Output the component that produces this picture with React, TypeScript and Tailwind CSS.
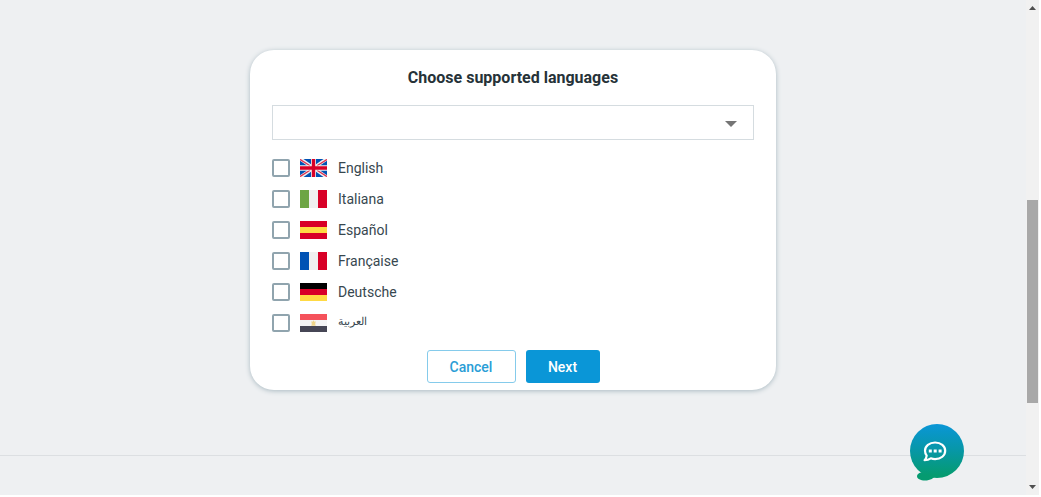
import { useState } from "react";
import type { ReactNode } from "react";

interface Language {
  code: string;
  label: string;
  flag: ReactNode;
}

const languages: Language[] = [
  {
    code: "en",
    label: "English",
    flag: (
      <>
        <path fill="#f0f0f0" d="M0 0h27v18H0z" />
        <path
          fill="#0052b4"
          d="M3.5 0H11V5.2zM23.5 0H16V5.2zM3.5 18H11V12.8zM23.5 18H16V12.8zM0 1.8V6.4H7zM27 1.8V6.4H20zM0 16.2V11.6H7zM27 16.2V11.6H20z"
        />
        <path stroke="#d80027" strokeOpacity=".8" strokeWidth="1.3" d="M0 .4 10 6.8M27 .4 17 6.8M0 17.6l10-6.4M27 17.6l-10-6.4" />
        <path fill="#f0f0f0" d="M11 0h5v18h-5zM0 6.400h27v5.200H0z" />
        <path fill="#d80027" d="M11.8 0h3.4v18h-3.4zM0 7.3h27v3.4H0z" />
      </>
    ),
  },
  {
    code: "it",
    label: "Italiana",
    flag: (
      <>
        <path fill="#f0f0f0" d="M0 0h27v18H0z" />
        <path fill="#6da544" d="M0 0h9v18H0z" />
        <path fill="#d80027" d="M18 0h9v18h-9z" />
      </>
    ),
  },
  {
    code: "es",
    label: "Español",
    flag: (
      <>
        <path fill="#d80027" d="M0 0h27v18H0z" />
        <path fill="#ffda44" d="M0 6h27v6H0z" />
      </>
    ),
  },
  {
    code: "fr",
    label: "Française",
    flag: (
      <>
        <path fill="#f0f0f0" d="M0 0h27v18H0z" />
        <path fill="#0052b4" d="M0 0h9v18H0z" />
        <path fill="#d80027" d="M18 0h9v18h-9z" />
      </>
    ),
  },
  {
    code: "de",
    label: "Deutsche",
    flag: (
      <>
        <path d="M0 0h27v6H0z" />
        <path fill="#d80027" d="M0 6h27v6H0z" />
        <path fill="#ffda44" d="M0 12h27v6H0z" />
      </>
    ),
  },
  {
    code: "ar",
    label: "العربية",
    flag: (
      <>
        <path fill="#f4f4f5" d="M0 0h27v18H0z" />
        <path fill="#f5525b" d="M0 0h27v6H0z" />
        <path fill="#464655" d="M0 12h27v6H0z" />
        <path fill="#efd58a" d="M11.3 7.2l1.3.6.9-1.5.9 1.5 1.3-.6-.5 3 .6 1.5h-4.6l.6-1.5z" />
      </>
    ),
  },
];

function LanguageRow({
  language,
  checked,
  onToggle,
}: {
  language: Language;
  checked: boolean;
  onToggle: () => void;
}) {
  return (
    <li>
      <label className="flex h-[31px] cursor-pointer items-center">
        <input
          type="checkbox"
          checked={checked}
          onChange={onToggle}
          className="size-[18px] shrink-0 appearance-none rounded-xs border-2 border-[#90a4ae] bg-white checked:bg-[#0a96d7]"
        />
        <svg viewBox="0 0 27 18" className="ml-2.5 h-[18px] w-[27px] shrink-0" aria-hidden="true">
          {language.flag}
        </svg>
        <span
          lang={language.code}
          className={`ml-[11px] text-[#37474f] ${language.code === "ar" ? "text-[11px]" : "text-sm"}`}
        >
          {language.label}
        </span>
      </label>
    </li>
  );
}

function ChatButton() {
  return (
    <button type="button" aria-label="Open chat" className="absolute right-[62px] bottom-3.5 cursor-pointer">
      <svg width="54" height="57" viewBox="0 0 54 57" fill="none" className="block">
        <defs>
          <linearGradient id="bubble" x1="0" y1="0" x2="0" y2="57" gradientUnits="userSpaceOnUse">
            <stop stopColor="#0a96d7" />
            <stop offset=".45" stopColor="#0797a8" />
            <stop offset=".9" stopColor="#059b70" />
          </linearGradient>
        </defs>
        <circle cx="27" cy="27" r="27" fill="url(#bubble)" />
        <path fill="url(#bubble)" d="M11 48.5c-2.5.6-4 2-4 3.8 0 2.5 3.5 4.2 8 4.2 5.5 0 9-2.5 11-5.5L22 45z" />
        <path
          stroke="#fff"
          strokeWidth="2.2"
          strokeLinejoin="round"
          d="M16.7 31.600c-1-1.300-1.700-3-1.700-4.800 0-4.800 4.300-8.300 10.100-8.300s10.100 3.500 10.100 8.300-4.300 8.300-10.100 8.300c-1.600 0-3-.3-4.300-.8-1.400 1-3.600 1.900-6.200 1.900 1.400-1.500 1.900-3 2.100-4.600z"
        />
        <path fill="#fff" d="M18.800 25.500h3v3h-3zM23.700 25.500h3v3h-3zM28.600 25.500h3v3h-3z" />
      </svg>
    </button>
  );
}

function ScrollTrack() {
  return (
    <div className="flex w-[13px] shrink-0 flex-col items-center bg-[#f1f1f1] py-1.5" aria-hidden="true">
      <svg width="7" height="4" viewBox="0 0 7 4" className="shrink-0">
        <path fill="#505050" d="M0 4 3.5 0 7 4z" />
      </svg>
      <div className="flex w-full flex-1 flex-col">
        <div className="flex-[190]" />
        <div className="mx-px flex-[203] bg-[#a8a8a8]" />
        <div className="flex-[82]" />
      </div>
      <svg width="7" height="4" viewBox="0 0 7 4" className="shrink-0">
        <path fill="#505050" d="M0 0h7L3.5 4z" />
      </svg>
    </div>
  );
}

export default function App() {
  const [selected, setSelected] = useState<string[]>([]);

  const toggle = (code: string) => {
    setSelected((prev) =>
      prev.includes(code) ? prev.filter((c) => c !== code) : [...prev, code]
    );
  };

  return (
    <div className="flex min-h-screen bg-white pr-0.5 pb-0.5 font-[Roboto,'Noto_Sans',sans-serif]">
      <div className="relative flex min-w-0 flex-1 flex-col bg-[#eef0f2]">
        <main className="flex flex-1 items-start justify-center px-4 pt-[50px] pb-4">
          <form
            onSubmit={(e) => e.preventDefault()}
            className="w-full max-w-[526px] rounded-3xl bg-white px-[22px] pt-4 pb-[7px] shadow-[0_1px_5px_#a9b9c1]"
          >
            <h1 className="text-center text-base leading-6 font-bold text-[#263238]">
              Choose supported languages
            </h1>

            <div className="relative mt-[15px]">
              <select
                aria-label="Supported language"
                defaultValue=""
                className="block h-[35px] w-full appearance-none border border-[#d5dce0] bg-white px-3 text-sm text-[#37474f]"
              >
                <option value="" />
                {languages.map((language) => (
                  <option key={language.code} value={language.code}>
                    {language.label}
                  </option>
                ))}
              </select>
              <svg
                width="12"
                height="6"
                viewBox="0 0 12 6"
                className="pointer-events-none absolute top-4 right-[17px]"
                aria-hidden="true"
              >
                <path fill="#757575" d="M0 0h12L6 6z" />
              </svg>
            </div>

            <ul className="mt-3">
              {languages.map((language) => (
                <LanguageRow
                  key={language.code}
                  language={language}
                  checked={selected.includes(language.code)}
                  onToggle={() => toggle(language.code)}
                />
              ))}
            </ul>

            <div className="mt-3 flex justify-center gap-2.5">
              <button
                type="button"
                className="h-[33px] w-[89px] cursor-pointer rounded-[3px] border border-[#85cbeb] bg-white text-sm font-medium text-[#2a9dd6]"
              >
                Cancel
              </button>
              <button
                type="submit"
                className="h-[33px] w-[74px] cursor-pointer rounded-[3px] bg-[#0a96d7] text-sm font-medium text-white"
              >
                Next
              </button>
            </div>
          </form>
        </main>

        <footer className="h-10 border-t border-[#dcdfe2]" />
        <ChatButton />
      </div>
      <ScrollTrack />
    </div>
  );
}
